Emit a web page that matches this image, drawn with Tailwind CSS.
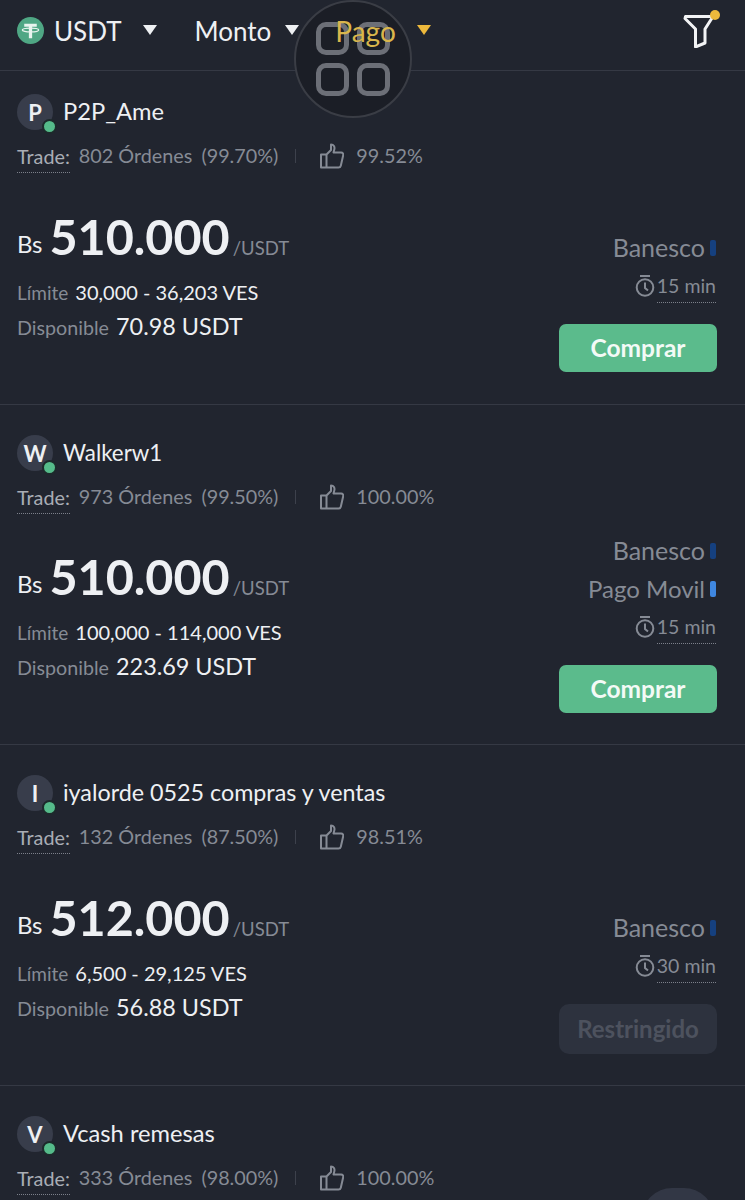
<!DOCTYPE html>
<html lang="es">
<head>
<meta charset="utf-8">
<script src="https://cdn.jsdelivr.net/npm/@tailwindcss/browser@4"></script>
</head>
<body class="bg-[#21252f]">
<div class="relative w-[745px] h-[1200px] overflow-hidden bg-[#21252f] text-[#eef0f3] font-['Lato','Liberation_Sans',sans-serif]">

  <header class="h-[71px] border-b border-[#353944] flex items-start pt-[16px] pl-[17px] pr-[29px] text-[26px] leading-[31px]">
    <svg class="w-[27px] h-[27px] mr-[11px] mt-[1px]" viewBox="0 0 28 28"><circle cx="14" cy="14" r="14" fill="#4fa784"/><path d="M7.500 7h13v3.200h-4.800V22h-3.400V10.200H7.500z" fill="#e8f4ee"/><ellipse cx="14" cy="13.500" rx="8.500" ry="2" fill="none" stroke="#e8f4ee" stroke-width="1.300"/></svg>
    <span class="-ml-[1px]">USDT</span>
    <svg class="w-[14px] h-[10px] ml-[21px] mt-[9px]" viewBox="0 0 14 10"><path d="M0 0h14L7 10z" fill="#eef0f3"/></svg>
    <span class="ml-[38px]">Monto</span>
    <svg class="w-[14px] h-[10px] ml-[14px] mt-[9px]" viewBox="0 0 14 10"><path d="M0 0h14L7 10z" fill="#eef0f3"/></svg>
    <span class="relative z-20 ml-[36px] text-[28px] text-[#d9b64c]">Pago</span>
    <svg class="w-[14px] h-[10px] ml-[21px] mt-[9px]" viewBox="0 0 14 10"><path d="M0 0h14L7 10z" fill="#edb93c"/></svg>
    <span class="relative ml-auto -mt-[4px] w-[36px] h-[36px]">
      <svg class="w-[36px] h-[36px]" viewBox="0 0 36 36"><path d="M5.500 4.500H33L25 17V31L15.500 35V17L5 6.500Z" fill="none" stroke="#f2f3f5" stroke-width="3" stroke-linejoin="round"/></svg>
      <span class="absolute right-[-4px] top-[-2px] w-[10px] h-[10px] rounded-full bg-[#edb93c]"></span>
    </span>
  </header>

  <!-- floating assistive button -->
  <div class="absolute z-10 left-[294px] top-0 w-[118px] h-[118px] rounded-full bg-[#1b1e26] border-2 border-[#3a3d45] grid grid-cols-[33px_33px] grid-rows-[33px_33px] gap-x-[8px] gap-y-[8px] content-center justify-center">
    <span class="rounded-[10px] border-[5px] border-[#6c6f77]"></span>
    <span class="rounded-[10px] border-[5px] border-[#6c6f77]"></span>
    <span class="rounded-[10px] border-[5px] border-[#6c6f77]"></span>
    <span class="rounded-[10px] border-[5px] border-[#6c6f77]"></span>
  </div>

  <!-- card 1 -->
  <section class="h-[334px] border-b border-[#353944] pl-[17px] pr-[28px] pt-[23px] flex flex-col">
    <div class="flex items-center h-[36px]">
      <div class="relative w-[36px] h-[36px] rounded-full bg-[#383d4b] flex items-center justify-center text-[22px] font-bold">P<span class="absolute right-[-4px] bottom-[-4px] w-[15px] h-[15px] rounded-full bg-[#55bb8a] border-2 border-[#1d2a2b]"></span></div>
      <span class="ml-[10px] pb-[1px] text-[23.700px]">P2P_Ame</span>
    </div>
    <div class="flex items-center mt-[8px] h-[36px] text-[19.800px] text-[#868b95]">
      <span class="text-[#a9adb5] border-b border-dotted border-[#7c808a] leading-[32px]">Trade:</span>
      <span class="ml-[9px]">802 Órdenes</span><span class="ml-[9px]">(99.70%)</span>
      <span class="ml-[17px] w-px h-[14px] bg-[#3d414c]"></span>
      <svg class="w-[24px] h-[26px] ml-[24px]" viewBox="0 0 24 26" fill="none" stroke="#868b95" stroke-width="2" stroke-linejoin="round"><path d="M1 11.500h5.500V24.500H1zM6.500 11.500 11 7V1.500c2.800 0 4 2.500 3.300 5L13.500 9.500h7.700c1.500 0 2.300 1.300 2 2.700l-2.400 10.500c-.3 1.200-1.200 1.800-2.300 1.800H6.500"/></svg>
      <span class="ml-[12px]">99.52%</span>
    </div>
    <div class="flex justify-between items-end flex-1 pb-[32px]">
      <div class="pb-[33px]">
        <div class="flex items-baseline">
          <span class="text-[24px] -translate-y-[2px]">Bs</span><span class="ml-[7px] text-[48.500px] leading-[58px] font-bold">510.000</span><span class="ml-[3px] text-[18.500px] text-[#868b95]">/USDT</span>
        </div>
        <div class="flex items-baseline mt-[12px] h-[30px]"><span class="text-[19px] text-[#868b95]">Límite</span><span class="ml-[7px] text-[20px]">30,000 - 36,203 VES</span></div>
        <div class="flex items-baseline mt-[2px] h-[30px]"><span class="text-[19.700px] text-[#868b95]">Disponible</span><span class="ml-[7px] text-[23.400px]">70.98 USDT</span></div>
      </div>
      <div class="flex flex-col items-end">
        <div class="flex items-center h-[38px] pr-[1px]"><span class="text-[25px] text-[#868b95]">Banesco</span><span class="ml-[5px] w-[6px] h-[16px] rounded-[2px] bg-[#15407f]"></span></div>
        <div class="flex items-center h-[38px] pr-[1px]">
          <svg class="w-[20px] h-[24px] mr-[2px]" viewBox="0 0 20 24" fill="none" stroke="#868b95" stroke-width="2"><path d="M5 2h10"/><circle cx="10" cy="13.500" r="8.300"/><path d="M10 8.500v5.500l3 2.500"/></svg>
          <span class="text-[19.500px] text-[#868b95] border-b border-dotted border-[#7c808a] leading-[32px] h-[33px]">15 min</span>
        </div>
        <button class="mt-[19px] w-[158px] h-[48px] rounded-[7px] bg-[#5bbb8c] text-[24.500px] font-bold text-[#f3faf6]">Comprar</button>
      </div>
    </div>
  </section>

  <!-- card 2 -->
  <section class="h-[340px] border-b border-[#353944] pl-[17px] pr-[28px] pt-[30px] flex flex-col">
    <div class="flex items-center h-[36px]">
      <div class="relative w-[36px] h-[36px] rounded-full bg-[#383d4b] flex items-center justify-center text-[22px] font-bold">W<span class="absolute right-[-4px] bottom-[-4px] w-[15px] h-[15px] rounded-full bg-[#55bb8a] border-2 border-[#1d2a2b]"></span></div>
      <span class="ml-[10px] pb-[1px] text-[22.300px]">Walkerw1</span>
    </div>
    <div class="flex items-center mt-[8px] h-[36px] text-[19.800px] text-[#868b95]">
      <span class="text-[#a9adb5] border-b border-dotted border-[#7c808a] leading-[32px]">Trade:</span>
      <span class="ml-[9px]">973 Órdenes</span><span class="ml-[9px]">(99.50%)</span>
      <span class="ml-[17px] w-px h-[14px] bg-[#3d414c]"></span>
      <svg class="w-[24px] h-[26px] ml-[24px]" viewBox="0 0 24 26" fill="none" stroke="#868b95" stroke-width="2" stroke-linejoin="round"><path d="M1 11.500h5.500V24.500H1zM6.500 11.500 11 7V1.500c2.800 0 4 2.500 3.300 5L13.500 9.500h7.700c1.500 0 2.300 1.300 2 2.700l-2.400 10.500c-.3 1.200-1.200 1.800-2.300 1.800H6.500"/></svg>
      <span class="ml-[12px]">100.00%</span>
    </div>
    <div class="flex justify-between items-end flex-1 pb-[31px]">
      <div class="pb-[34px]">
        <div class="flex items-baseline">
          <span class="text-[24px] -translate-y-[2px]">Bs</span><span class="ml-[7px] text-[48.500px] leading-[58px] font-bold">510.000</span><span class="ml-[3px] text-[18.500px] text-[#868b95]">/USDT</span>
        </div>
        <div class="flex items-baseline mt-[12px] h-[30px]"><span class="text-[19px] text-[#868b95]">Límite</span><span class="ml-[7px] text-[20px]">100,000 - 114,000 VES</span></div>
        <div class="flex items-baseline mt-[2px] h-[30px]"><span class="text-[19.700px] text-[#868b95]">Disponible</span><span class="ml-[7px] text-[23.400px]">223.69 USDT</span></div>
      </div>
      <div class="flex flex-col items-end">
        <div class="flex items-center h-[38px] pr-[1px]"><span class="text-[25px] text-[#868b95]">Banesco</span><span class="ml-[5px] w-[6px] h-[16px] rounded-[2px] bg-[#15407f]"></span></div>
        <div class="flex items-center h-[38px] pr-[1px]"><span class="text-[24px] text-[#868b95]">Pago Movil</span><span class="ml-[5px] w-[6px] h-[16px] rounded-[2px] bg-[#3f87e0]"></span></div>
        <div class="flex items-center h-[38px] pr-[1px]">
          <svg class="w-[20px] h-[24px] mr-[2px]" viewBox="0 0 20 24" fill="none" stroke="#868b95" stroke-width="2"><path d="M5 2h10"/><circle cx="10" cy="13.500" r="8.300"/><path d="M10 8.500v5.500l3 2.500"/></svg>
          <span class="text-[19.500px] text-[#868b95] border-b border-dotted border-[#7c808a] leading-[32px] h-[33px]">15 min</span>
        </div>
        <button class="mt-[19px] w-[158px] h-[48px] rounded-[7px] bg-[#5bbb8c] text-[24.500px] font-bold text-[#f3faf6]">Comprar</button>
      </div>
    </div>
  </section>

  <!-- card 3 -->
  <section class="h-[341px] border-b border-[#353944] pl-[17px] pr-[28px] pt-[30px] flex flex-col">
    <div class="flex items-center h-[36px]">
      <div class="relative w-[36px] h-[36px] rounded-full bg-[#383d4b] flex items-center justify-center text-[22px] font-bold">I<span class="absolute right-[-4px] bottom-[-4px] w-[15px] h-[15px] rounded-full bg-[#55bb8a] border-2 border-[#1d2a2b]"></span></div>
      <span class="ml-[10px] pb-[1px] text-[23.300px]">iyalorde 0525 compras y ventas</span>
    </div>
    <div class="flex items-center mt-[8px] h-[36px] text-[19.800px] text-[#868b95]">
      <span class="text-[#a9adb5] border-b border-dotted border-[#7c808a] leading-[32px]">Trade:</span>
      <span class="ml-[9px]">132 Órdenes</span><span class="ml-[9px]">(87.50%)</span>
      <span class="ml-[17px] w-px h-[14px] bg-[#3d414c]"></span>
      <svg class="w-[24px] h-[26px] ml-[24px]" viewBox="0 0 24 26" fill="none" stroke="#868b95" stroke-width="2" stroke-linejoin="round"><path d="M1 11.500h5.500V24.500H1zM6.500 11.500 11 7V1.500c2.800 0 4 2.500 3.300 5L13.500 9.500h7.700c1.500 0 2.300 1.300 2 2.700l-2.400 10.500c-.3 1.200-1.200 1.800-2.300 1.800H6.500"/></svg>
      <span class="ml-[12px]">98.51%</span>
    </div>
    <div class="flex justify-between items-end flex-1 pb-[31px]">
      <div class="pb-[34px]">
        <div class="flex items-baseline">
          <span class="text-[24px] -translate-y-[2px]">Bs</span><span class="ml-[7px] text-[48.500px] leading-[58px] font-bold">512.000</span><span class="ml-[3px] text-[18.500px] text-[#868b95]">/USDT</span>
        </div>
        <div class="flex items-baseline mt-[12px] h-[30px]"><span class="text-[19px] text-[#868b95]">Límite</span><span class="ml-[7px] text-[20px]">6,500 - 29,125 VES</span></div>
        <div class="flex items-baseline mt-[2px] h-[30px]"><span class="text-[19.700px] text-[#868b95]">Disponible</span><span class="ml-[7px] text-[23.400px]">56.88 USDT</span></div>
      </div>
      <div class="flex flex-col items-end">
        <div class="flex items-center h-[38px] pr-[1px]"><span class="text-[25px] text-[#868b95]">Banesco</span><span class="ml-[5px] w-[6px] h-[16px] rounded-[2px] bg-[#15407f]"></span></div>
        <div class="flex items-center h-[38px] pr-[1px]">
          <svg class="w-[20px] h-[24px] mr-[2px]" viewBox="0 0 20 24" fill="none" stroke="#868b95" stroke-width="2"><path d="M5 2h10"/><circle cx="10" cy="13.500" r="8.300"/><path d="M10 8.500v5.500l3 2.500"/></svg>
          <span class="text-[19.500px] text-[#868b95] border-b border-dotted border-[#7c808a] leading-[32px] h-[33px]">30 min</span>
        </div>
        <button class="mt-[19px] w-[158px] h-[50px] rounded-[10px] bg-[#2d323e] text-[24px] font-bold text-[#4d525e]">Restringido</button>
      </div>
    </div>
  </section>

  <!-- card 4 -->
  <section class="relative pl-[17px] pr-[28px] pt-[30px]">
    <div class="flex items-center h-[36px]">
      <div class="relative w-[36px] h-[36px] rounded-full bg-[#383d4b] flex items-center justify-center text-[22px] font-bold">V<span class="absolute right-[-4px] bottom-[-4px] w-[15px] h-[15px] rounded-full bg-[#55bb8a] border-2 border-[#1d2a2b]"></span></div>
      <span class="ml-[10px] pb-[1px] text-[23.700px]">Vcash remesas</span>
    </div>
    <div class="flex items-center mt-[8px] h-[36px] text-[19.800px] text-[#868b95]">
      <span class="text-[#a9adb5] border-b border-dotted border-[#7c808a] leading-[32px]">Trade:</span>
      <span class="ml-[9px]">333 Órdenes</span><span class="ml-[9px]">(98.00%)</span>
      <span class="ml-[17px] w-px h-[14px] bg-[#3d414c]"></span>
      <svg class="w-[24px] h-[26px] ml-[24px]" viewBox="0 0 24 26" fill="none" stroke="#868b95" stroke-width="2" stroke-linejoin="round"><path d="M1 11.500h5.500V24.500H1zM6.500 11.500 11 7V1.500c2.800 0 4 2.500 3.300 5L13.500 9.500h7.700c1.500 0 2.300 1.300 2 2.700l-2.400 10.500c-.3 1.200-1.200 1.800-2.300 1.800H6.500"/></svg>
      <span class="ml-[12px]">100.00%</span>
    </div>
    <span class="absolute left-[642px] top-[102px] w-[72px] h-[40px] rounded-t-[30px] bg-[#323745]"></span>
  </section>
</div>
</body>
</html>
